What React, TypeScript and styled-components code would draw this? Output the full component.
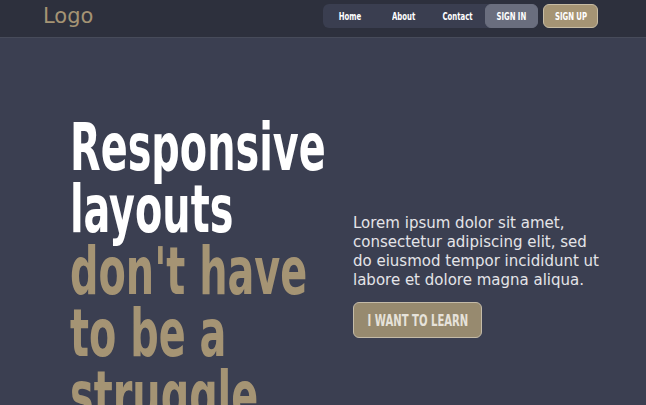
import styled, { createGlobalStyle } from "styled-components";

const GlobalStyle = createGlobalStyle`
  html, body {
    margin: 0;
    padding: 0;
    background: #3b3f51;
    overflow: hidden;
  }
  * {
    box-sizing: border-box;
  }
`;

// no Oswald offline: condensed DejaVu, squeezed a little further
const display = `"DejaVu Sans Condensed", "DejaVu Sans", sans-serif`;
const body = `"DejaVu Sans", "Noto Sans", sans-serif`;

const links = ["Home", "About", "Contact"];

const App = () => {
  return (
    <>
      <GlobalStyle />
      <Header>
        <Logo>Logo</Logo>
        <Nav>
          <NavPill>
            {links.map((l) => (
              <NavLink key={l}>
                <Squeeze>{l}</Squeeze>
              </NavLink>
            ))}
            <NavButton $variant="muted" $width={53}>
              <Squeeze>SIGN IN</Squeeze>
            </NavButton>
          </NavPill>
          <NavButton $variant="gold" $width={55}>
            <Squeeze>SIGN UP</Squeeze>
          </NavButton>
        </Nav>
      </Header>

      <Hero>
        <Headline>
          <HeadlineText>
            Responsive
            <br />
            layouts
            <br />
            <Accent>
              don't have
              <br />
              to be a
              <br />
              struggle
            </Accent>
          </HeadlineText>
        </Headline>
        <Side>
          <Lead>
            Lorem ipsum dolor sit amet, consectetur adipiscing elit, sed do
            eiusmod tempor incididunt ut labore et dolore magna aliqua.
          </Lead>
          <Cta>
            <Squeeze>I WANT TO LEARN</Squeeze>
          </Cta>
        </Side>
      </Hero>
    </>
  );
};

const Header = styled.header`
  height: 38px;
  display: flex;
  align-items: flex-start;
  justify-content: space-between;
  padding: 0 48px 0 43px;
  background-color: #2d303d;
  border-bottom: 1px solid #474b5a;
`;

const Logo = styled.div`
  font-family: ${body};
  font-size: 21px;
  line-height: 32px;
  color: #a59474;
`;

const Nav = styled.nav`
  display: flex;
  align-items: center;
  gap: 5px;
  padding-top: 4px;
`;

const NavPill = styled.div`
  display: flex;
  align-items: center;
  height: 24px;
  border-radius: 6px;
  background-color: #3a3e50;
`;

const Squeeze = styled.span`
  display: inline-block;
  white-space: nowrap;
  transform: scaleX(0.7);
`;

const NavLink = styled.a`
  width: 54px;
  display: flex;
  justify-content: center;
  font-family: ${display};
  font-weight: 700;
  font-size: 11px;
  color: #ffffff;
`;

const NavButton = styled.button<{ $variant: "muted" | "gold"; $width: number }>`
  width: ${(p) => p.$width}px;
  height: 24px;
  padding: 0;
  display: flex;
  align-items: center;
  justify-content: center;
  border-radius: 6px;
  font-family: ${display};
  font-weight: 700;
  font-size: 11px;
  color: #ffffff;
  border: 1px solid ${(p) => (p.$variant === "gold" ? "#c7bca4" : "#6a6e7e")};
  background-color: ${(p) => (p.$variant === "gold" ? "#a59474" : "#6a6e7e")};
`;

const Hero = styled.main`
  display: flex;
  align-items: flex-start;
  padding: 79px 0 0 70px;
  gap: 28px;
`;

const Headline = styled.h1`
  width: 255px;
  margin: 0;
  font-family: ${display};
  font-weight: 700;
  font-size: 66px;
  line-height: 62px;
  color: #ffffff;
`;

const HeadlineText = styled.span`
  display: block;
  width: 400px;
  white-space: nowrap;
  transform: scaleX(0.67);
  transform-origin: left top;
`;

const Accent = styled.span`
  color: #a59474;
`;

const Side = styled.div`
  width: 254px;
  padding-top: 97px;
`;

const Lead = styled.p`
  margin: 0 0 12px;
  font-family: ${body};
  font-size: 15px;
  line-height: 19px;
  color: #e4e4e8;
`;

const Cta = styled.button`
  width: 129px;
  height: 36px;
  padding: 0;
  display: flex;
  align-items: center;
  justify-content: center;
  border-radius: 6px;
  border: 1px solid #c4bba8;
  background-color: #978a6f;
  font-family: ${display};
  font-weight: 700;
  font-size: 16px;
  color: #e6e2da;
`;

export default App;
